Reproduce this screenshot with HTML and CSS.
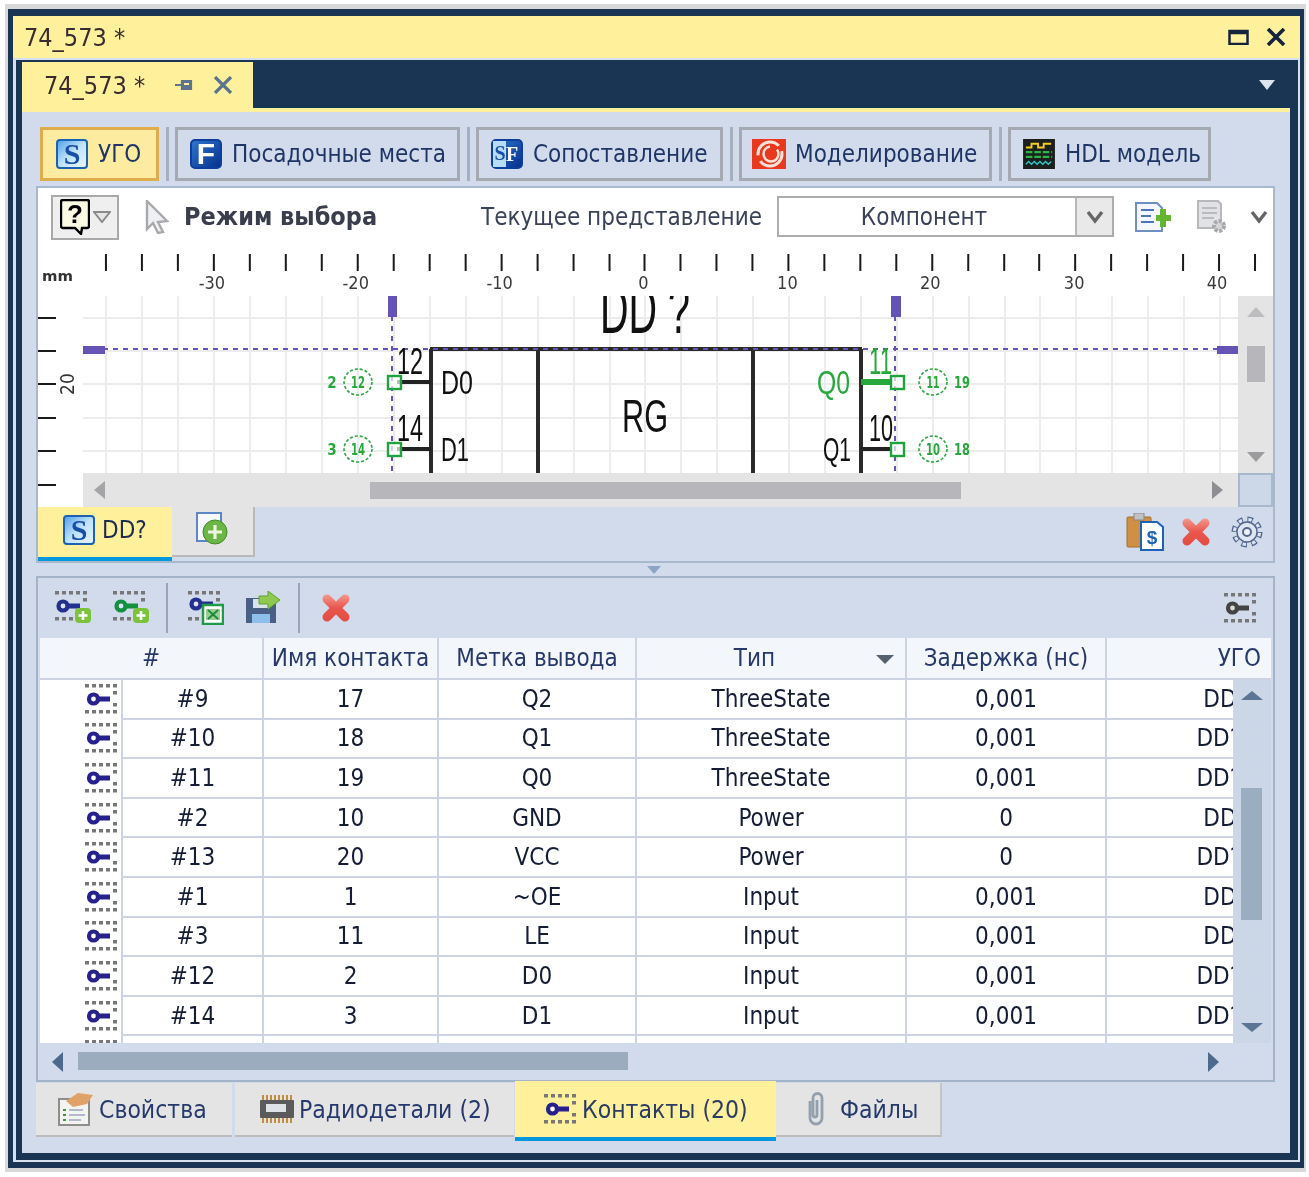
FILE: index.html
```html
<!DOCTYPE html>
<html lang="ru">
<head>
<meta charset="utf-8">
<title>74_573</title>
<link rel="stylesheet" href="styles.css">
</head>
<body>
<svg class="sprites" width="0" height="0">
  <defs>
    <linearGradient id="gS" x1="0" y1="0" x2="1" y2="1"><stop offset="0" stop-color="#4f9fe8"/><stop offset=".5" stop-color="#bfe2fb"/><stop offset="1" stop-color="#e9f6ff"/></linearGradient>
    <linearGradient id="gF" x1="0" y1="0" x2="1" y2="1"><stop offset="0" stop-color="#2f77d0"/><stop offset="1" stop-color="#062f8c"/></linearGradient>
    <linearGradient id="gX" x1="0" y1="0" x2="0" y2="30" gradientUnits="userSpaceOnUse"><stop offset="0" stop-color="#f5a095"/><stop offset=".5" stop-color="#e9564c"/><stop offset="1" stop-color="#e24a42"/></linearGradient>
    <symbol id="i-s" viewBox="0 0 32 30"><rect x="1" y="1" width="30" height="28" rx="3" fill="url(#gS)" stroke="#1b62b5" stroke-width="2"/><text x="16" y="25" class="sv-glyph" fill="#174ea6">S</text></symbol>
    <symbol id="i-f" viewBox="0 0 32 30"><rect x="1" y="1" width="30" height="28" rx="4" fill="url(#gF)" stroke="#0b3f9b" stroke-width="2"/><text x="16" y="25" class="sv-glyph sv-sans" fill="#fff">F</text></symbol>
    <symbol id="i-sf" viewBox="0 0 32 30"><rect x="1" y="1" width="30" height="28" rx="4" fill="url(#gF)" stroke="#0b3f9b" stroke-width="2"/><rect x="2" y="2" width="13" height="26" fill="#b7dcf8"/><text x="9" y="21" class="sv-small" fill="#174ea6">S</text><text x="21" y="22" class="sv-small sv-sans" fill="#fff">F</text></symbol>
    <symbol id="i-model" viewBox="0 0 34 30"><rect width="34" height="30" fill="#e8381d"/><circle cx="18" cy="15" r="12" fill="none" stroke="#fbe3da" stroke-width="3" stroke-dasharray="30 6"/><circle cx="19" cy="15" r="7.5" fill="none" stroke="#fbe3da" stroke-width="2.5" stroke-dasharray="34 8"/></symbol>
    <symbol id="i-hdl" viewBox="0 0 34 32"><rect width="34" height="32" fill="#1b1f1d"/><path d="M3 9h6V5h7v4h6V5h8" fill="none" stroke="#f4cd1f" stroke-width="2"/><path d="M3 14h28M3 19h28" stroke="#28b84a" stroke-width="2.4" stroke-dasharray="7 2"/><path d="M3 27l3-3 3 3 3-3 3 3 3-3 3 3 3-3 3 3 3-3" fill="none" stroke="#2ec6c6" stroke-width="1.5"/></symbol>
    <symbol id="i-x" viewBox="0 0 30 30"><path d="M6 6l18 18M24 6L6 24" stroke="url(#gX)" stroke-width="9" stroke-linecap="round" fill="none"/></symbol>
    <symbol id="i-dots" viewBox="0 0 32 30"><g fill="#777"><rect x="0" y="0" width="4" height="3.5"/><rect x="7" y="0" width="4" height="3.5"/><rect x="14" y="0" width="4" height="3.5"/><rect x="21" y="0" width="4" height="3.5"/><rect x="28" y="0" width="4" height="3.5"/><rect x="28" y="7" width="4" height="3.5"/><rect x="28" y="19" width="4" height="3.5"/><rect x="0" y="26" width="4" height="3.5"/><rect x="7" y="26" width="4" height="3.5"/><rect x="14" y="26" width="4" height="3.5"/><rect x="21" y="26" width="4" height="3.5"/><rect x="28" y="26" width="4" height="3.5"/></g></symbol>
    <symbol id="i-pin" viewBox="0 0 32 30"><use href="#i-dots" width="32" height="30"/><circle cx="8.500" cy="15" r="4.500" fill="#fff" stroke="#26218c" stroke-width="4.200"/><rect x="13" y="12.500" width="12" height="5" fill="#26218c"/></symbol>
    <symbol id="i-pin-grey" viewBox="0 0 32 30"><use href="#i-dots" width="32" height="30"/><circle cx="8.500" cy="15" r="4.500" fill="#ddd" stroke="#444" stroke-width="4.200"/><rect x="13" y="12.500" width="12" height="5" fill="#444"/></symbol>
    <symbol id="i-pin-add" viewBox="0 0 36 34"><use href="#i-dots" width="32" height="30"/><circle cx="8" cy="15" r="4.500" fill="#dfe6f2" stroke="#23308f" stroke-width="4.200"/><rect x="12" y="12.500" width="13" height="5" fill="#23308f"/><rect x="20" y="17" width="16" height="15" rx="4" fill="#7cc23a"/><path d="M28 20v9M23.500 24.500h9" stroke="#fff" stroke-width="2.600"/></symbol>
    <symbol id="i-pin-add2" viewBox="0 0 36 34"><use href="#i-dots" width="32" height="30"/><circle cx="8" cy="15" r="4.500" fill="#dfe6f2" stroke="#149040" stroke-width="4.200"/><rect x="12" y="12.500" width="13" height="5" fill="#149040"/><rect x="20" y="17" width="16" height="15" rx="4" fill="#7cc23a"/><path d="M28 20v9M23.500 24.500h9" stroke="#fff" stroke-width="2.600"/></symbol>
    <symbol id="i-pin-xls" viewBox="0 0 36 34"><use href="#i-dots" width="32" height="30"/><circle cx="8" cy="13" r="4.500" fill="#dfe6f2" stroke="#23308f" stroke-width="4.200"/><rect x="12" y="10.500" width="13" height="5" fill="#23308f"/><rect x="15" y="14" width="20" height="19" fill="#fff" stroke="#1e9a48" stroke-width="2.500"/><rect x="18" y="18" width="14" height="11" fill="#9ad08f"/><path d="M20 19l10 9M30 19l-10 9" stroke="#1e8a40" stroke-width="2"/></symbol>
    <symbol id="i-save" viewBox="0 0 36 34"><path d="M1 7h24l6 5v20H1z" fill="#4a5f85"/><rect x="8" y="8" width="15" height="9" fill="#dbe3ee"/><rect x="7" y="23" width="18" height="9" fill="#8cc0ea"/><path d="M14 5h9V0l12 9-12 9v-5h-9z" fill="#8fc94f" stroke="#5fa22f"/></symbol>
    <symbol id="i-gear" viewBox="0 0 32 32"><circle cx="16" cy="16" r="12.500" fill="none" stroke="#53678e" stroke-width="6" stroke-dasharray="5.300 4.520"/><circle cx="16" cy="16" r="12.500" fill="none" stroke="#dfe6f1" stroke-width="3.200" stroke-dasharray="3.300 6.520" stroke-dashoffset="-1"/><circle cx="16" cy="16" r="10" fill="#dfe6f1" stroke="#53678e" stroke-width="1.400"/><circle cx="16" cy="16" r="4" fill="#eef2f8" stroke="#53678e" stroke-width="2"/></symbol>
  </defs>
</svg>

<div class="frame-gray">
<div class="frame-navy">
<div class="window">
  <header class="titlebar">
    <span class="title-text">74_573 *</span>
    <span class="title-btns">
      <svg class="ic-max" viewBox="0 0 20 16"><path d="M1 2h18v13H1zM1 4h18" fill="none" stroke="#15233f" stroke-width="2.500"/></svg>
      <svg class="ic-close" viewBox="0 0 20 18"><path d="M2 1l16 16M18 1L2 17" stroke="#15233f" stroke-width="3.600"/></svg>
    </span>
  </header>
  <div class="window-inner">
    <div class="doc-strip">
      <div class="doc-tab">
        <span class="doc-name">74_573 *</span>
        <svg class="ic-pin" viewBox="0 0 20 16"><path d="M1 8h7M8 3v10M8 4h9v8H8" fill="#5c7390" stroke="#5c7390" stroke-width="2.200"/><rect x="10" y="6" width="5" height="2" fill="#fff09b"/></svg>
        <svg class="ic-tabx" viewBox="0 0 20 18"><path d="M2 1l16 16M18 1L2 17" stroke="#5c7390" stroke-width="3.200"/></svg>
      </div>
      <svg class="ic-strip-arrow" viewBox="0 0 16 10"><path d="M0 0h16L8 10z" fill="#dbe4ef"/></svg>
    </div>
    <main class="panel">
      <nav class="mode-tabs">
        <a class="mode-btn mode-on w-ugo"><svg class="ic32"><use href="#i-s"/></svg><span>УГО</span></a>
        <i class="mode-sep"></i>
        <a class="mode-btn w-fp"><svg class="ic32"><use href="#i-f"/></svg><span>Посадочные места</span></a>
        <i class="mode-sep"></i>
        <a class="mode-btn w-map"><svg class="ic32"><use href="#i-sf"/></svg><span>Сопоставление</span></a>
        <i class="mode-sep"></i>
        <a class="mode-btn w-sim"><svg class="ic32 ic34"><use href="#i-model"/></svg><span>Моделирование</span></a>
        <i class="mode-sep"></i>
        <a class="mode-btn w-hdl"><svg class="ic32 ic34"><use href="#i-hdl"/></svg><span>HDL модель</span></a>
      </nav>

      <section class="editor">
        <div class="edit-toolbar">
          <button class="help-btn">
            <svg class="ic-help" viewBox="0 0 30 36"><path d="M3 1h24a2 2 0 0 1 2 2v24a2 2 0 0 1-2 2h-5l-1 6-6-6H3a2 2 0 0 1-2-2V3a2 2 0 0 1 2-2z" fill="#fbfbe4" stroke="#000" stroke-width="2.400"/><text x="15" y="24" class="help-q">?</text></svg>
            <svg class="ic-down" viewBox="0 0 18 12"><path d="M1 1h16L9 11z" fill="#e6e6e6" stroke="#8a8a8a" stroke-width="2"/></svg>
          </button>
          <svg class="ic-cursor" viewBox="0 0 24 34"><path d="M2 1l20 20-9 1 5 10-5 1-5-10-6 6z" fill="#eef0f3" stroke="#a9a9ad" stroke-width="2.400"/></svg>
          <b class="mode-label">Режим выбора</b>
          <span class="view-label">Текущее представление</span>
          <div class="combo"><span class="combo-val">Компонент</span><span class="combo-btn"><svg class="ic-chev" viewBox="0 0 18 14"><path d="M2 2l7 9 7-9" fill="none" stroke="#666" stroke-width="3.400"/></svg></span></div>
          <svg class="ic-docadd" viewBox="0 0 36 30"><path d="M1 1h21l5 5v23H1z" fill="#f4f8fd" stroke="#6f8ec6" stroke-width="2"/><path d="M6 8h13M6 14h10M6 20h13" stroke="#4a78b8" stroke-width="2"/><path d="M21 13h4V7h6v6h5v6h-5v6h-6v-6h-4z" fill="#64b52f"/></svg>
          <svg class="ic-docgear" viewBox="0 0 30 34"><path d="M1 1h20l3 3v24H1z" fill="#e0e2e6" stroke="#b6b8bc" stroke-width="2"/><path d="M5 8h15M5 13h15M5 18h12" stroke="#bbb" stroke-width="2"/><circle cx="22" cy="26" r="5" fill="#d5d5d8" stroke="#a8a8aa" stroke-width="4" stroke-dasharray="3 1.500"/></svg>
          <svg class="ic-chev ic-chev2" viewBox="0 0 18 14"><path d="M2 2l7 9 7-9" fill="none" stroke="#666" stroke-width="3.400"/></svg>
        </div>

        <svg class="ruler-top" viewBox="38 245 1236 51">
          <g class="ticks">
            <path d="M106 254v17M142 254v17M178 254v17M214 254v17M250 254v17M286 254v17M322 254v17M358 254v17M394 254v17M430 254v17M466 254v17M502 254v17M538 254v17M574 254v17M610 254v17M645 254v17M681 254v17M717 254v17M753 254v17M789 254v17M825 254v17M861 254v17M897 254v17M933 254v17M969 254v17M1005 254v17M1040 254v17M1076 254v17M1112 254v17M1148 254v17M1184 254v17M1220 254v17M1256 254v17"/>
          </g>
          <text class="mm" x="42" y="281" textLength="31" lengthAdjust="spacingAndGlyphs">mm</text>
          <g class="rlabels">
            <text x="212" y="289">-30</text><text x="356" y="289">-20</text><text x="500" y="289">-10</text><text x="644" y="289">0</text><text x="788" y="289">10</text><text x="931" y="289">20</text><text x="1075" y="289">30</text><text x="1218" y="289">40</text>
          </g>
        </svg>

        <div class="canvas-row">
          <svg class="ruler-left" viewBox="38 296 45 211">
            <path class="ticks" d="M38 318h18M38 351h18M38 384h18M38 418h18M38 451h18M38 485h18"/>
            <text class="rlabel-v" transform="translate(74 384) rotate(-90)">20</text>
          </svg>
          <div class="canvas-col">
            <div class="canvas-top">
              <svg class="drawing" viewBox="83 296 1155 177">
                <path class="grid" d="M106 296v177M142 296v177M178 296v177M214 296v177M250 296v177M286 296v177M322 296v177M358 296v177M394 296v177M430 296v177M466 296v177M502 296v177M538 296v177M574 296v177M610 296v177M645 296v177M681 296v177M717 296v177M753 296v177M789 296v177M825 296v177M861 296v177M897 296v177M933 296v177M969 296v177M1005 296v177M1040 296v177M1076 296v177M1112 296v177M1148 296v177M1184 296v177M1220 296v177M83 318h1155M83 351h1155M83 384h1155M83 418h1155M83 451h1155"/>
                <path class="body" d="M430 349h432M431 349v124M538 349v124M753 349v124M861 349v124"/>
                <path class="pinline" d="M397 382h34M397 449h34M861 449h30"/>
                <path class="pinline-on" d="M861 382h30"/>
                <path class="guide" d="M83 349h1155M392 296v177M895 296v177"/>
                <path class="handle" d="M83 346h22v8H83zM1217 346h21v8h-21zM388 296h9v21h-9zM891 296h10v21h-10z"/>
                <g class="pin-box"><rect x="388" y="376" width="13" height="13"/><rect x="388" y="443" width="13" height="13"/><rect x="891" y="376" width="13" height="13"/><rect x="891" y="443" width="13" height="13"/></g>
                <g class="sym">
                  <text x="600" y="333" font-size="68" textLength="90" lengthAdjust="spacingAndGlyphs">DD ?</text>
                  <text x="622" y="432" font-size="46" textLength="46" lengthAdjust="spacingAndGlyphs">RG</text>
                  <text x="441" y="394" font-size="33" textLength="32" lengthAdjust="spacingAndGlyphs">D0</text>
                  <text x="441" y="461" font-size="33" textLength="28" lengthAdjust="spacingAndGlyphs">D1</text>
                  <text x="823" y="461" font-size="33" textLength="28" lengthAdjust="spacingAndGlyphs">Q1</text>
                  <text x="397" y="374" font-size="36" textLength="26" lengthAdjust="spacingAndGlyphs">12</text>
                  <text x="397" y="441" font-size="36" textLength="26" lengthAdjust="spacingAndGlyphs">14</text>
                  <text x="869" y="441" font-size="36" textLength="24" lengthAdjust="spacingAndGlyphs">10</text>
                </g>
                <g class="sym sym-on">
                  <text x="817" y="394" font-size="33" textLength="33" lengthAdjust="spacingAndGlyphs">Q0</text>
                  <text x="869" y="374" font-size="36" textLength="23" lengthAdjust="spacingAndGlyphs">11</text>
                </g>
                <g class="ring"><ellipse cx="358" cy="382" rx="14" ry="13"/><ellipse cx="358" cy="449" rx="14" ry="13"/><ellipse cx="933" cy="382" rx="14" ry="13"/><ellipse cx="933" cy="449" rx="14" ry="13"/></g>
                <g class="ring-text">
                  <text x="358" y="388" textLength="14" lengthAdjust="spacingAndGlyphs">12</text><text x="358" y="455" textLength="14" lengthAdjust="spacingAndGlyphs">14</text><text x="933" y="388" textLength="13" lengthAdjust="spacingAndGlyphs">11</text><text x="933" y="455" textLength="14" lengthAdjust="spacingAndGlyphs">10</text>
                  <text x="332" y="388">2</text><text x="332" y="455">3</text><text x="962" y="388" textLength="16" lengthAdjust="spacingAndGlyphs">19</text><text x="962" y="455" textLength="16" lengthAdjust="spacingAndGlyphs">18</text>
                </g>
              </svg>
              <div class="vscroll-a">
                <i class="tri tri-up"></i>
                <i class="vthumb-a"></i>
                <i class="tri tri-down"></i>
              </div>
            </div>
            <div class="hscroll-a">
              <i class="tri tri-left"></i>
              <i class="hthumb-a"></i>
              <i class="tri tri-right"></i>
              <i class="corner-a"></i>
            </div>
          </div>
        </div>

        <div class="sheet-row">
          <a class="sheet sheet-on"><svg class="ic-sheet"><use href="#i-s"/></svg><span>DD?</span></a>
          <a class="sheet sheet-add">
            <svg class="ic-addsheet" viewBox="0 0 34 34"><rect x="1" y="1" width="24" height="28" fill="#f5f8fd" stroke="#5d86c6" stroke-width="2"/><circle cx="19" cy="20" r="12" fill="#6db544" stroke="#3f8c25"/><path d="M19 13v14M12 20h14" stroke="#eaf6df" stroke-width="3.200"/></svg>
          </a>
          <span class="sheet-tools">
            <svg class="ic-clip" viewBox="0 0 38 38"><rect x="1" y="4" width="24" height="30" rx="1" fill="#cf8f44" stroke="#a86f2c"/><rect x="8" y="0" width="10" height="7" fill="#c2c2c2" stroke="#888"/><path d="M15 9h16l6 5v23H15z" fill="#fff" stroke="#1c63b8" stroke-width="2"/><text x="26" y="31" class="clip-s">$</text></svg>
            <svg class="ic-x"><use href="#i-x"/></svg>
            <svg class="ic-gear"><use href="#i-gear"/></svg>
          </span>
        </div>
      </section>

      <div class="splitter"><svg class="ic-split" viewBox="0 0 14 8"><path d="M0 0h14L7 8z" fill="#8ea4c4"/></svg></div>

      <section class="pins">
        <div class="pin-toolbar">
          <svg class="tb-ic tb-a"><use href="#i-pin-add"/></svg>
          <svg class="tb-ic tb-b"><use href="#i-pin-add2"/></svg>
          <i class="tb-sep"></i>
          <svg class="tb-ic tb-c"><use href="#i-pin-xls"/></svg>
          <svg class="tb-ic tb-d"><use href="#i-save"/></svg>
          <i class="tb-sep tb-sep2"></i>
          <svg class="tb-ic tb-e"><use href="#i-x"/></svg>
          <svg class="tb-ic tb-f"><use href="#i-pin-grey"/></svg>
        </div>
        <div class="grid-head">
          <div class="hc hc-hash">#</div>
          <div class="hc">Имя контакта</div>
          <div class="hc">Метка вывода</div>
          <div class="hc hc-type"><span>Тип</span><i class="sort"></i></div>
          <div class="hc">Задержка (нс)</div>
          <div class="hc hc-ugo">УГО</div>
        </div>
        <div class="grid-mid">
          <div class="rows">
            <div class="row"><div class="c c-ic"><svg class="pin-ic"><use href="#i-pin"/></svg></div><div class="c">#9</div><div class="c">17</div><div class="c">Q2</div><div class="c">ThreeState</div><div class="c">0,001</div><div class="c c-ugo">DD?.9</div></div>
            <div class="row"><div class="c c-ic"><svg class="pin-ic"><use href="#i-pin"/></svg></div><div class="c">#10</div><div class="c">18</div><div class="c">Q1</div><div class="c">ThreeState</div><div class="c">0,001</div><div class="c c-ugo">DD?.10</div></div>
            <div class="row"><div class="c c-ic"><svg class="pin-ic"><use href="#i-pin"/></svg></div><div class="c">#11</div><div class="c">19</div><div class="c">Q0</div><div class="c">ThreeState</div><div class="c">0,001</div><div class="c c-ugo">DD?.11</div></div>
            <div class="row"><div class="c c-ic"><svg class="pin-ic"><use href="#i-pin"/></svg></div><div class="c">#2</div><div class="c">10</div><div class="c">GND</div><div class="c">Power</div><div class="c">0</div><div class="c c-ugo">DD?.2</div></div>
            <div class="row"><div class="c c-ic"><svg class="pin-ic"><use href="#i-pin"/></svg></div><div class="c">#13</div><div class="c">20</div><div class="c">VCC</div><div class="c">Power</div><div class="c">0</div><div class="c c-ugo">DD?.13</div></div>
            <div class="row"><div class="c c-ic"><svg class="pin-ic"><use href="#i-pin"/></svg></div><div class="c">#1</div><div class="c">1</div><div class="c">~OE</div><div class="c">Input</div><div class="c">0,001</div><div class="c c-ugo">DD?.1</div></div>
            <div class="row"><div class="c c-ic"><svg class="pin-ic"><use href="#i-pin"/></svg></div><div class="c">#3</div><div class="c">11</div><div class="c">LE</div><div class="c">Input</div><div class="c">0,001</div><div class="c c-ugo">DD?.3</div></div>
            <div class="row"><div class="c c-ic"><svg class="pin-ic"><use href="#i-pin"/></svg></div><div class="c">#12</div><div class="c">2</div><div class="c">D0</div><div class="c">Input</div><div class="c">0,001</div><div class="c c-ugo">DD?.12</div></div>
            <div class="row"><div class="c c-ic"><svg class="pin-ic"><use href="#i-pin"/></svg></div><div class="c">#14</div><div class="c">3</div><div class="c">D1</div><div class="c">Input</div><div class="c">0,001</div><div class="c c-ugo">DD?.14</div></div>
            <div class="row"><div class="c c-ic"><svg class="pin-ic"><use href="#i-pin"/></svg></div><div class="c"></div><div class="c"></div><div class="c"></div><div class="c"></div><div class="c"></div><div class="c"></div></div>
          </div>
          <div class="vscroll-b">
            <i class="tri tri-up-b"></i>
            <i class="vthumb-b"></i>
            <i class="tri tri-down-b"></i>
          </div>
        </div>
        <div class="hscroll-b">
          <i class="tri tri-left-b"></i>
          <i class="hthumb-b"></i>
          <i class="tri tri-right-b"></i>
        </div>
      </section>

      <nav class="bottom-tabs">
        <a class="btab w-props">
          <svg class="btab-ic" viewBox="0 0 36 34"><rect x="1" y="7" width="30" height="26" fill="#f3f3f0" stroke="#8d8d8d" stroke-width="2"/><path d="M5 18h3M5 23h3M5 28h3" stroke="#3b9b3b" stroke-width="2"/><path d="M11 18h14M11 23h16M11 28h12" stroke="#9aa8c0" stroke-width="1.600"/><path d="M8 9L20 1l15 2-6 9-14 3z" fill="#e0a268"/></svg>
          <span>Свойства</span>
        </a>
        <a class="btab w-parts">
          <svg class="btab-ic btab-chip" viewBox="0 0 34 28"><path d="M3 0v28M7 0v28M11 0v28M15 0v28M19 0v28M23 0v28M27 0v28M31 0v28" stroke="#c18d3e" stroke-width="2"/><rect x="0" y="5" width="34" height="18" rx="1" fill="#5b5b5b"/><rect x="6" y="9" width="20" height="8" fill="#dfe3e8"/></svg>
          <span>Радиодетали (2)</span>
        </a>
        <a class="btab btab-on w-pins">
          <svg class="pin-ic"><use href="#i-pin"/></svg>
          <span>Контакты (20)</span>
        </a>
        <a class="btab w-files">
          <svg class="btab-ic btab-clip" viewBox="0 0 22 36"><path d="M5 10v17a6 6 0 0 0 12 0V7a4.500 4.500 0 0 0-9 0v17a2 2 0 0 0 4 0V9" fill="none" stroke="#93a0ad" stroke-width="2.800"/></svg>
          <span>Файлы</span>
        </a>
      </nav>
    </main>
  </div>
</div>
</div>
</div>
</body>
</html>
```
FILE: styles.css
```css
* { box-sizing: border-box; }
html, body { margin: 0; padding: 0; background: #fff; }
body {
  font-family: "DejaVu Sans", "Liberation Sans", sans-serif;
  font-stretch: condensed;
  font-size: 24px;
  color: #1c2d52;
}
i { display: block; font-style: normal; }
a { display: flex; }
.sprites { position: absolute; }

.frame-gray { margin: 4px 3px 5px 5px; height: 1168px; padding: 5px 2px 4px 3px; background: #d9d9d9; filter: blur(.45px); }
.frame-navy { height: 100%; padding: 7px 4px 6px 5px; background: #1a3553; }
.window { height: 100%; background: #d6e0ee; display: flex; flex-direction: column; }

.titlebar { height: 42px; flex: none; background: #fff09b; display: flex; align-items: center; justify-content: space-between; padding: 0 14px 0 11px; }
.title-text { font-size: 25px; color: #3a2b30; }
.title-btns { display: flex; align-items: center; gap: 17px; }
.ic-max { width: 21px; height: 16px; }
.ic-close { width: 20px; height: 18px; }

.window-inner { flex: 1; min-height: 0; margin: 2px 2px 2px 3px; background: #1a3553; padding: 0 8px 7px 6px; display: flex; flex-direction: column; }
.doc-strip { height: 48px; flex: none; display: flex; align-items: flex-start; justify-content: space-between; }
.doc-tab { margin-top: 2px; width: 231px; height: 46px; background: #fff09b; display: flex; align-items: center; padding-left: 22px; }
.doc-name { font-size: 25px; color: #3a2b30; width: 130px; }
.ic-pin { width: 20px; height: 16px; }
.ic-tabx { width: 20px; height: 18px; margin-left: 19px; }
.ic-strip-arrow { width: 16px; height: 10px; margin: 20px 15px 0 0; }

.panel { flex: 1; min-height: 0; background: #d1dbeb; border-top: 4px solid #fff09b; padding: 15px 0 0 14px; }

.mode-tabs { display: flex; height: 54px; margin-left: 4px; }
.mode-btn { height: 54px; border: 3px solid #a5a9b1; align-items: center; gap: 10px; padding-left: 12px; color: #1f3566; font-size: 24px; white-space: nowrap; }
.mode-on { background: #fdeb9f; border-color: #e0ad4c; }
.w-ugo { width: 119px; padding-left: 13px; }
.w-fp { width: 285px; }
.w-map { width: 247px; }
.w-sim { width: 253px; gap: 9px; padding-left: 10px; }
.w-hdl { width: 203px; gap: 9px; padding-left: 11px; }
.mode-sep { width: 3px; height: 54px; margin: 0 6.500px; background: #a5afbd; }
.ic32 { width: 32px; height: 30px; flex: none; }
.ic34 { width: 34px; }
.sv-glyph { font: bold 30px "Liberation Serif", serif; text-anchor: middle; }
.sv-sans { font-family: "Liberation Sans", sans-serif; }
.sv-small { font: bold 20px "Liberation Serif", serif; text-anchor: middle; }

.editor { margin-top: 5px; width: 1239px; height: 377px; border: 2px solid #a9b9cd; background: #fff; }
.edit-toolbar { height: 57px; display: flex; align-items: center; padding-left: 13px; background: #fff; }
.help-btn { width: 68px; height: 45px; margin: 1px 0 0 0; padding: 0 0 0 7px; background: #efefef; border: 2px solid #a9a9a9; display: flex; align-items: center; gap: 3px; }
.ic-help { width: 30px; height: 36px; flex: none; }
.help-q { font: bold 26px "Liberation Sans", sans-serif; text-anchor: middle; fill: #000; }
.ic-down { width: 18px; height: 12px; flex: none; }
.ic-cursor { width: 24px; height: 34px; margin-left: 26px; flex: none; }
.mode-label { font-size: 25px; margin-left: 15px; width: 297px; flex: none; color: #3a3d4c; font-weight: bold; }
.view-label { width: 296px; flex: none; color: #3a4258; white-space: nowrap; }
.combo { width: 337px; height: 41px; flex: none; border: 2px solid #adadad; display: flex; }
.combo-val { flex: 1; text-align: center; line-height: 39px; padding-right: 6px; color: #3a4258; }
.combo-btn { width: 37px; background: #e9e9e9; border-left: 2px solid #b9b9b9; display: flex; align-items: center; justify-content: center; }
.ic-chev { width: 18px; height: 14px; flex: none; }
.ic-docadd { width: 36px; height: 30px; margin-left: 21px; flex: none; }
.ic-docgear { width: 30px; height: 34px; margin-left: 26px; flex: none; }
.ic-chev2 { margin-left: 23px; }

.ruler-top { display: block; width: 1235px; height: 51px; }
.ticks { stroke: #1a1a1a; stroke-width: 2; fill: none; }
.mm { font-size: 14px; font-weight: bold; fill: #333; }
.rlabels text { font-size: 18px; fill: #3a3a3a; text-anchor: middle; }
.rlabel-v { font-size: 19px; fill: #333; text-anchor: middle; }

.canvas-row { display: flex; height: 211px; }
.ruler-left { display: block; width: 45px; height: 211px; flex: none; }
.canvas-col { width: 1190px; flex: none; }
.canvas-top { display: flex; height: 177px; }
.drawing { display: block; width: 1155px; height: 177px; flex: none; background: #fff; }
.grid { stroke: #ececec; stroke-width: 2; fill: none; }
.body { stroke: #2a2a2a; stroke-width: 4; fill: none; }
.pinline { stroke: #222; stroke-width: 4; fill: none; }
.pinline-on { stroke: #27a83c; stroke-width: 6; fill: none; }
.guide { stroke: #6553b5; stroke-width: 2; stroke-dasharray: 5 5; fill: none; }
.handle { fill: #6553b5; }
.pin-box rect { fill: #fff; fill-opacity: .7; stroke: #1fa33c; stroke-width: 2.400; }
.sym text { font-family: "Liberation Sans", sans-serif; font-stretch: normal; fill: #111; }
.sym-on text { fill: #27a83c; }
.ring ellipse { fill: none; stroke: #27a83c; stroke-width: 1.600; stroke-dasharray: 3 2; }
.ring-text text { font-family: "DejaVu Sans", sans-serif; font-stretch: condensed; font-size: 15px; font-weight: bold; text-anchor: middle; fill: #27a83c; }

.vscroll-a { width: 35px; height: 177px; flex: none; background: #e4e4e4; display: flex; flex-direction: column; align-items: center; padding: 11px 0 11px 0; justify-content: space-between; position: relative; }
.vthumb-a { position: absolute; top: 50px; left: 9px; width: 18px; height: 36px; background: #b7b7bb; }
.hscroll-a { height: 34px; display: flex; align-items: center; background: #e4e4e4; position: relative; padding-left: 11px; }
.hthumb-a { position: absolute; left: 287px; top: 9px; width: 591px; height: 17px; background: #b7b7bb; }
.corner-a { width: 35px; height: 34px; margin-left: auto; background: #ccd8e8; border: 2px solid #a9b9cd; }

.tri { width: 0; height: 0; flex: none; border-style: solid; border-color: transparent; }
.tri-up { border-width: 0 9px 10px; border-bottom-color: #bdbdc0; }
.tri-down { border-width: 10px 9px 0; border-top-color: #9c9c9f; }
.tri-left { border-width: 9px 11px 9px 0; border-right-color: #a5a5a8; }
.tri-right { border-width: 9px 0 9px 11px; border-left-color: #8f8f93; margin-left: 1107px; }
.tri-up-b { border-width: 0 11px 9px; border-bottom-color: #5b7595; }
.tri-down-b { border-width: 9px 11px 0; border-top-color: #5b7595; }
.tri-left-b { border-width: 10px 11px 10px 0; border-right-color: #4c6a8c; }
.tri-right-b { border-width: 10px 0 10px 11px; border-left-color: #4c6a8c; margin-left: 1145px; }

.sheet-row { height: 54px; background: #d1dbeb; display: flex; align-items: flex-start; }
.sheet { height: 50px; align-items: center; }
.sheet-on { width: 134px; height: 54px; background: #fff09b; border-bottom: 4px solid #0098dc; padding: 0 0 4px 25px; gap: 7px; }
.ic-sheet { width: 32px; height: 30px; flex: none; }
.sheet-add { width: 83px; background: #e4e4e4; border: solid #b9b9b9; border-width: 0 2px 2px 0; padding: 0 0 4px 24px; }
.ic-addsheet { width: 34px; height: 34px; }
.sheet-tools { margin-left: auto; display: flex; align-items: center; height: 50px; padding-right: 10px; }
.ic-clip { width: 38px; height: 38px; margin-right: 2px; }
.clip-s { font: bold 19px "Liberation Sans", sans-serif; fill: #1c63b8; text-anchor: middle; }
.ic-x { width: 30px; height: 30px; margin-left: 15px; }
.ic-gear { width: 32px; height: 32px; margin-left: 20px; }

.splitter { height: 13px; display: flex; justify-content: center; align-items: center; width: 1239px; padding-right: 4px; }
.ic-split { width: 14px; height: 8px; }

.pins { width: 1239px; height: 506px; border: 2px solid #a4b4c8; background: #d1dbeb; padding: 0 2px; }
.pin-toolbar { height: 60px; margin: 0 -2px; display: flex; align-items: center; position: relative; }
.tb-ic { flex: none; }
.tb-a { width: 36px; height: 34px; margin-left: 17px; }
.tb-b { width: 36px; height: 34px; margin-left: 22px; }
.tb-sep { width: 2px; height: 50px; background: #99a6b8; margin-left: 17px; flex: none; }
.tb-c { width: 36px; height: 34px; margin-left: 20px; }
.tb-d { width: 36px; height: 34px; margin-left: 21px; }
.tb-sep2 { margin-left: 17px; }
.tb-e { width: 30px; height: 30px; margin-left: 21px; }
.tb-f { width: 32px; height: 30px; margin-left: auto; margin-right: 17px; }

.grid-head, .row { display: grid; width: 1231px; }
.grid-head { grid-template-columns: 224px 175px 198px 270px 200px 164px; height: 42px; background: #f3f7fc; border-bottom: 2px solid #cdd3e3; }
.hc { display: flex; align-items: center; justify-content: center; border-right: 2px solid #cdd3e3; color: #27396a; white-space: nowrap; }
.hc-type { position: relative; padding-right: 33px; }
.sort { position: absolute; right: 11px; top: 17px; width: 0; height: 0; border-style: solid; border-width: 9px 9px 0; border-color: #55606e transparent transparent; }
.hc-ugo { justify-content: flex-end; padding-right: 10px; border-right: 0; }
.grid-mid { display: flex; height: 363px; }
.rows { width: 1193px; flex: none; overflow: hidden; background: #fff; }
.row { grid-template-columns: 83px 141px 175px 198px 270px 200px 164px; height: 39.600px; color: #141c36; }
.c { display: flex; align-items: center; justify-content: center; border-right: 2px solid #cdd3e3; border-bottom: 2px solid #cdd3e3; white-space: nowrap; overflow: hidden; }
.c-ic { justify-content: flex-end; padding: 0 4px 2px 0; border-bottom: 0; }
.c-ugo { padding-left: 94px; justify-content: center; border-right: 0; overflow: visible; }
.pin-ic { width: 32px; height: 30px; flex: none; }
.vscroll-b { flex: none; width: 38px; background: #cbd6e6; position: relative; display: flex; flex-direction: column; align-items: center; justify-content: space-between; padding: 11px 0 11px; }
.vthumb-b { position: absolute; top: 108px; left: 8px; width: 21px; height: 132px; background: #9badc0; }
.hscroll-b { height: 37px; display: flex; align-items: center; padding-left: 12px; position: relative; }
.hthumb-b { position: absolute; left: 38px; top: 9px; width: 550px; height: 18px; background: #9aacbe; }

.bottom-tabs { display: flex; align-items: flex-start; margin-top: -1px; height: 60px; font-size: 24.500px; }
.btab { align-items: center; height: 54px; margin-top: 2px; background: #e4e4e4; border-bottom: 2px solid #bcbcbc; color: #25396c; white-space: nowrap; }
.w-props { width: 196px; padding-left: 22px; gap: 5px; }
.w-parts { width: 279px; margin-left: 3px; padding-left: 25px; gap: 5px; }
.w-pins { width: 261px; padding-left: 29px; gap: 6px; margin-left: 1px; }
.w-files { width: 166px; padding-left: 29px; gap: 13px; border-right: 2px solid #c4c4c4; }
.btab-on { height: 60px; margin-top: 0; background: #fff09b; border-bottom: 4px solid #0098dc; color: #2a3c66; }
.btab-ic { width: 36px; height: 34px; flex: none; }
.btab-chip { width: 34px; height: 28px; }
.btab-clip { width: 22px; height: 36px; }
```
